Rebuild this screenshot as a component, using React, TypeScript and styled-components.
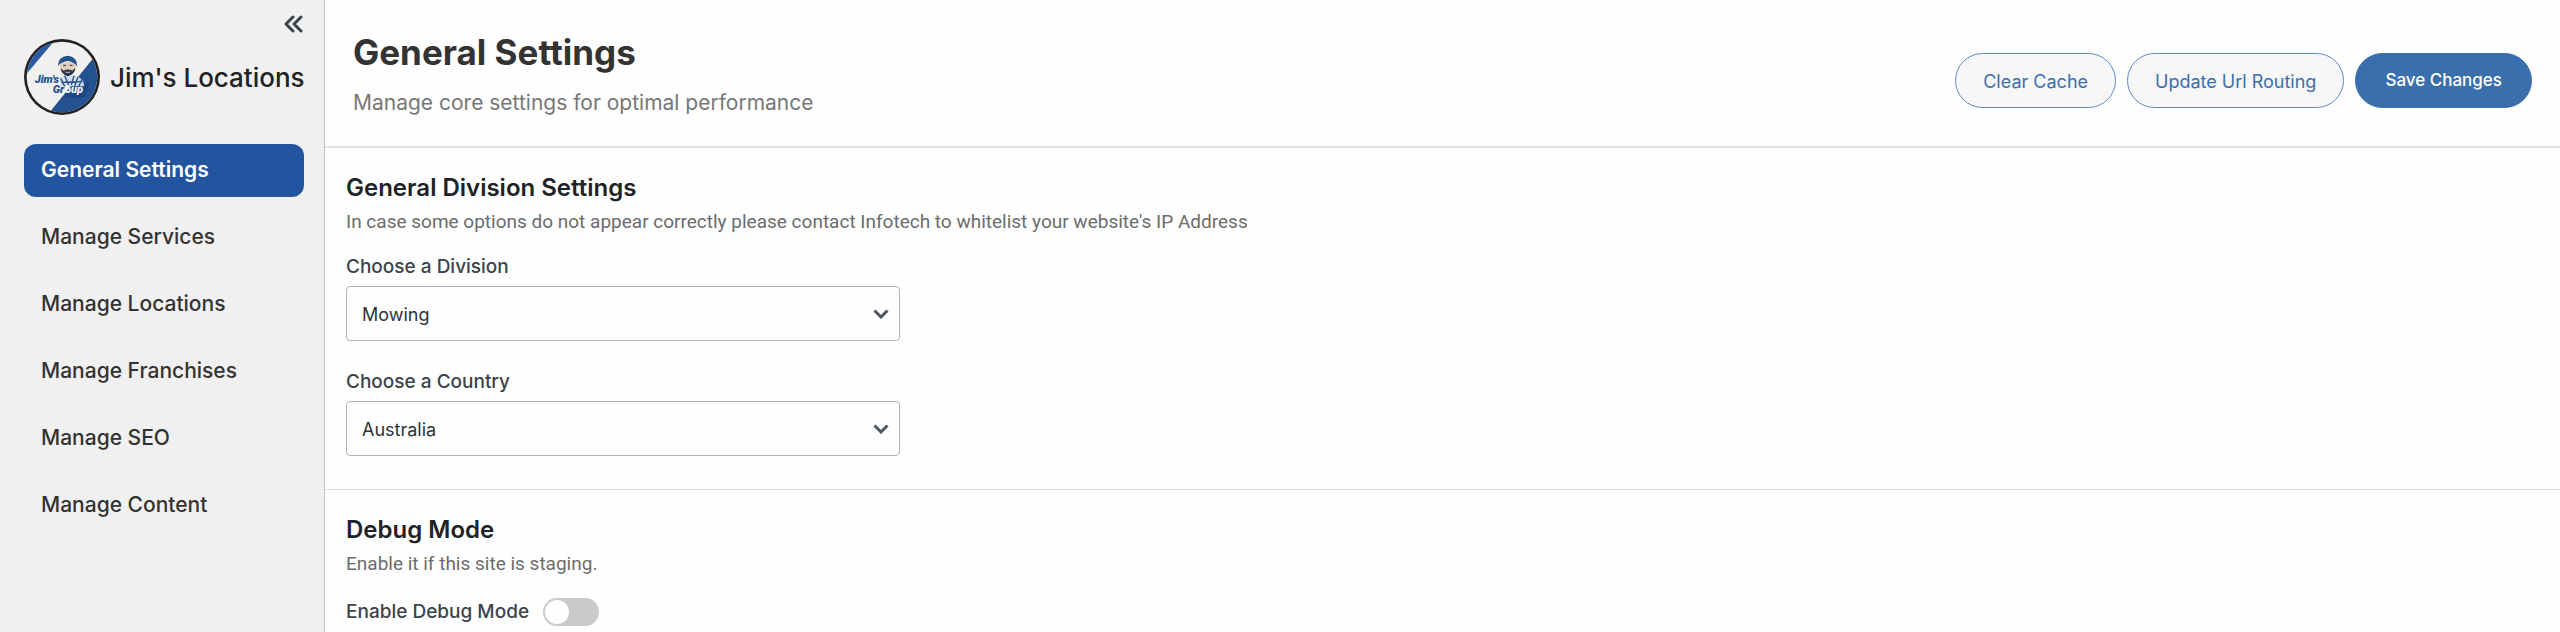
import React, { useState } from "react";
import styled, { createGlobalStyle } from "styled-components";

const GlobalStyle = createGlobalStyle`
  *, *::before, *::after { box-sizing: border-box; }
  body { margin: 0; background: #fefefe; font-family: Inter, "Liberation Sans", sans-serif; }
  h1, h2, p { margin: 0; }
  button, select { font-family: inherit; }
`;

const Layout = styled.div`
  display: flex;
  min-height: 100vh;
`;

const Sidebar = styled.aside`
  flex: none;
  width: 325px;
  padding: 14px 20px 24px 24px;
  background: #f0f0f0;
  border-right: 1px solid #c3c4c7;
`;

const CollapseButton = styled.button`
  display: block;
  margin-left: auto;
  padding: 0;
  border: 0;
  background: none;
  line-height: 0;
  cursor: pointer;
`;

const Brand = styled.div`
  display: flex;
  align-items: center;
  gap: 10px;
  margin-top: 5px;
  svg { flex: none; }
`;

const BrandName = styled.span`
  padding-top: 2px;
  font-size: 26px;
  line-height: 32px;
  font-weight: 500;
  color: #222;
  white-space: nowrap;
`;

const Nav = styled.nav`
  display: flex;
  flex-direction: column;
  gap: 14px;
  margin-top: 29px;
`;

const NavLink = styled.a<{ $active?: boolean }>`
  padding: 10px 17px 11px;
  border-radius: 12px;
  font-size: 21px;
  line-height: 32px;
  font-weight: ${(p) => (p.$active ? 600 : 500)};
  text-decoration: none;
  color: ${(p) => (p.$active ? "#fff" : "#333")};
  background: ${(p) => (p.$active ? "#2254a0" : "transparent")};
`;

const Main = styled.main`
  flex: 1;
  min-width: 0;
`;

const Header = styled.header`
  display: flex;
  justify-content: space-between;
  align-items: flex-end;
  padding: 28px 28px 27px;
  border-bottom: 2px solid #e2e2e2;
`;

const Title = styled.h1`
  font-size: 35px;
  line-height: 48px;
  font-weight: 700;
  color: #333;
`;

const Subtitle = styled.p`
  margin-top: 11px;
  font-size: 21px;
  line-height: 32px;
  color: #777;
`;

const Actions = styled.div`
  display: flex;
  gap: 11px;
  padding-bottom: 11px;
`;

const PillButton = styled.button<{ $primary?: boolean }>`
  padding: ${(p) => (p.$primary ? "0 29px" : "1px 27px 0")};
  border: 1px solid ${(p) => (p.$primary ? "#3a6fae" : "#5f8dc3")};
  border-radius: 28px;
  font-size: ${(p) => (p.$primary ? 17 : 18)}px;
  line-height: 53px;
  height: 55px;
  font-weight: ${(p) => (p.$primary ? 500 : 400)};
  color: ${(p) => (p.$primary ? "#fff" : "#3a6fae")};
  background: ${(p) => (p.$primary ? "#3a6fae" : "#f7f7f7")};
  cursor: pointer;
`;

const Section = styled.section`
  padding: 24px 21px 33px;
  & + & {
    padding-bottom: 0;
    border-top: 1px solid #dedede;
  }
`;

const SectionTitle = styled.h2`
  font-size: 24px;
  line-height: 32px;
  font-weight: 600;
  color: #1d2327;
`;

const Hint = styled.p`
  margin-top: 4px;
  font-family: Roboto, "Liberation Sans", sans-serif;
  font-size: 19px;
  line-height: 28px;
  color: #6c6c6c;
`;

const Field = styled.div`
  margin-top: 27px;
  ${Hint} + & { margin-top: 17px; }
`;

const Label = styled.label`
  display: block;
  font-size: 19px;
  line-height: 28px;
  font-weight: 500;
  color: #3c434a;
`;

const SelectWrap = styled.div`
  position: relative;
  max-width: 554px;
  margin-top: 5px;
  svg {
    position: absolute;
    right: 11px;
    top: 50%;
    transform: translateY(-50%);
    pointer-events: none;
  }
`;

const Select = styled.select`
  appearance: none;
  width: 100%;
  height: 55px;
  padding: 1px 40px 0 15px;
  border: 1px solid #b4b4b4;
  border-radius: 4px;
  background: #fefefe;
  font-size: 18px;
  color: #2c3338;
`;

const ToggleRow = styled.div`
  display: flex;
  align-items: center;
  gap: 14px;
  margin-top: 20px;
`;

const Toggle = styled.input`
  appearance: none;
  display: flex;
  align-items: center;
  width: 56px;
  height: 28px;
  margin: 0;
  padding: 0 2px;
  border-radius: 14px;
  background: #cacaca;
  cursor: pointer;
  &::before {
    content: "";
    width: 24px;
    height: 24px;
    border-radius: 50%;
    background: #fefefe;
  }
  &:checked {
    justify-content: flex-end;
    background: #2254a0;
  }
`;

const Logo = () => (
  <svg width="76" height="76" viewBox="0 0 228 228" role="img" aria-label="Jim's Group">
    <defs>
      <clipPath id="disc"><circle cx="114" cy="114" r="106" /></clipPath>
    </defs>
    <circle cx="114" cy="114" r="114" fill="#222" />
    <g clipPath="url(#disc)">
      <rect width="228" height="228" fill="#f2f0ef" />
      <path d="M0 0H96L13 98L0 114Z" fill="#2a5ca6" />
      <path d="M228 32L83 212V228H228Z" fill="#245291" />
      <path d="M132 150L198 128L182 176H120Z" fill="#1d4684" />
      <path d="M108 118Q118 104 132 104Q160 106 178 126L180 142H110Z" fill="#d5deea" />
      <path d="M110 118L122 142M122 110L134 138M150 110L142 138M162 114L152 142M174 122L164 142M112 130L176 128" stroke="#245291" strokeWidth="4" fill="none" />
      <path d="M108 70H156V90Q152 108 131 110Q112 108 108 90Z" fill="#e4cfba" />
      <path d="M102 82Q102 52 131 50Q160 52 160 84Q154 70 131 66Q108 70 102 82Z" fill="#245291" />
      <path d="M110 88L119 95Q131 88 145 95L154 86Q153 105 131 112Q112 105 110 88Z" fill="#24344c" />
      <path d="M124 99Q131 102 138 99" stroke="#e4cfba" strokeWidth="3" fill="none" />
      <path d="M117 79H126M137 79H146" stroke="#24344c" strokeWidth="3" />
    </g>
    <g fontFamily="Roboto, sans-serif" fontWeight="900" fontStyle="italic" fontSize="33">
      <text x="32" y="132" fill="#245291">Jim's</text>
      <text x="86" y="161" fill="#245291">Gr</text>
      <text x="123" y="161" fill="#f2f4f8">oup</text>
    </g>
  </svg>
);

const CollapseIcon = () => (
  <svg width="20" height="20" viewBox="0 0 20 20" fill="none" stroke="#3c434a" strokeWidth="3" strokeLinecap="round" strokeLinejoin="round">
    <path d="M9 3L2 10L9 17M17 3L10 10L17 17" />
  </svg>
);

const ChevronDown = () => (
  <svg width="16" height="10" viewBox="0 0 16 10" fill="none" stroke="#50575e" strokeWidth="3">
    <path d="M1.500 1.500L8 8L14.500 1.500" />
  </svg>
);

const navItems = [
  "General Settings",
  "Manage Services",
  "Manage Locations",
  "Manage Franchises",
  "Manage SEO",
  "Manage Content",
];

type SelectFieldProps = { id: string; label: string; options: string[] };

const SelectField = ({ id, label, options }: SelectFieldProps) => (
  <Field>
    <Label htmlFor={id}>{label}</Label>
    <SelectWrap>
      <Select id={id} defaultValue={options[0]}>
        {options.map((o) => (
          <option key={o}>{o}</option>
        ))}
      </Select>
      <ChevronDown />
    </SelectWrap>
  </Field>
);

export default function App() {
  const [debug, setDebug] = useState(false);
  return (
    <>
      <GlobalStyle />
      <Layout>
        <Sidebar>
          <CollapseButton type="button" aria-label="Collapse menu">
            <CollapseIcon />
          </CollapseButton>
          <Brand>
            <Logo />
            <BrandName>Jim's Locations</BrandName>
          </Brand>
          <Nav>
            {navItems.map((item, i) => (
              <NavLink key={item} href="#" $active={i === 0}>
                {item}
              </NavLink>
            ))}
          </Nav>
        </Sidebar>
        <Main>
          <Header>
            <div>
              <Title>General Settings</Title>
              <Subtitle>Manage core settings for optimal performance</Subtitle>
            </div>
            <Actions>
              <PillButton type="button">Clear Cache</PillButton>
              <PillButton type="button">Update Url Routing</PillButton>
              <PillButton type="button" $primary>Save Changes</PillButton>
            </Actions>
          </Header>
          <Section>
            <SectionTitle>General Division Settings</SectionTitle>
            <Hint>
              In case some options do not appear correctly please contact Infotech to whitelist your website's IP Address
            </Hint>
            <SelectField id="division" label="Choose a Division" options={["Mowing"]} />
            <SelectField id="country" label="Choose a Country" options={["Australia"]} />
          </Section>
          <Section>
            <SectionTitle>Debug Mode</SectionTitle>
            <Hint>Enable it if this site is staging.</Hint>
            <ToggleRow>
              <Label htmlFor="debug">Enable Debug Mode</Label>
              <Toggle
                id="debug"
                type="checkbox"
                role="switch"
                checked={debug}
                onChange={(e) => setDebug(e.target.checked)}
              />
            </ToggleRow>
          </Section>
        </Main>
      </Layout>
    </>
  );
}
